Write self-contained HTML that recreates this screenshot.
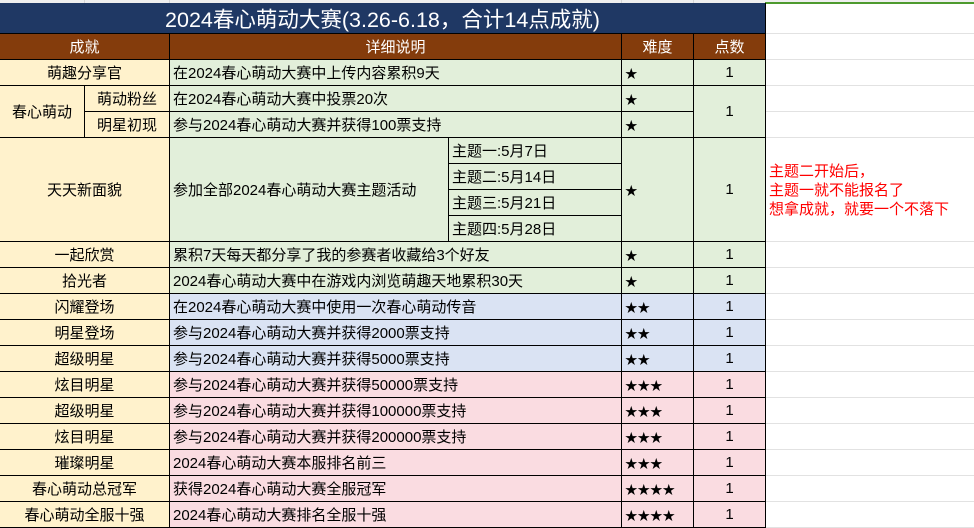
<!DOCTYPE html>
<html><head><meta charset="utf-8"><style>
*{margin:0;padding:0;box-sizing:border-box}
body{width:974px;height:528px;position:relative;background:#fff;overflow:hidden;font-family:"Liberation Sans","Noto Sans CJK SC",sans-serif;font-size:15px;color:#000}
.c{position:absolute;border-right:1px solid #000;border-bottom:1px solid #000;display:flex;align-items:center;white-space:nowrap;overflow:hidden}
.m{justify-content:center}
.l{padding-left:3px}
.s{font-size:12.5px;padding-left:3px}
.y{background:#FFF2CC}.g{background:#E2EFDA}.b{background:#DAE3F3}.p{background:#FADCE1}
.h{background:#843C0C;color:#fff;justify-content:center}
.gl{position:absolute;left:766px;width:208px;height:1px;background:#e2e2e2}
.vl{position:absolute;top:0;height:3px;width:1px;background:#d6d6d6}
</style></head><body>
<div style="position:absolute;left:0;top:0;width:974px;height:3px;background:#efefef"></div>
<div class="vl" style="left:84px"></div><div class="vl" style="left:169px"></div><div class="vl" style="left:621px"></div><div class="vl" style="left:693px"></div>
<div style="position:absolute;left:765px;top:2px;width:209px;height:2px;background:#4E9A2E"></div>
<div class="c m" style="left:0;top:3px;width:766px;height:31px;background:#1F3864;color:#fff;font-size:21.5px">2024春心萌动大赛(3.26-6.18，合计14点成就)</div>
<div class="c h" style="left:0;top:34px;width:170px;height:26px">成就</div>
<div class="c h" style="left:170px;top:34px;width:452px;height:26px">详细说明</div>
<div class="c h" style="left:622px;top:34px;width:72px;height:26px">难度</div>
<div class="c h" style="left:694px;top:34px;width:72px;height:26px">点数</div>

<div class="c m y" style="left:0;top:60px;width:170px;height:26px">萌趣分享官</div>
<div class="c l g" style="left:170px;top:60px;width:452px;height:26px">在2024春心萌动大赛中上传内容累积9天</div>
<div class="c s g" style="left:622px;top:60px;width:72px;height:26px">★</div>
<div class="c m g" style="left:694px;top:60px;width:72px;height:26px">1</div>

<div class="c m y" style="left:0;top:86px;width:85px;height:52px">春心萌动</div>
<div class="c m y" style="left:85px;top:86px;width:85px;height:26px">萌动粉丝</div>
<div class="c m y" style="left:85px;top:112px;width:85px;height:26px">明星初现</div>
<div class="c l g" style="left:170px;top:86px;width:452px;height:26px">在2024春心萌动大赛中投票20次</div>
<div class="c l g" style="left:170px;top:112px;width:452px;height:26px">参与2024春心萌动大赛并获得100票支持</div>
<div class="c s g" style="left:622px;top:86px;width:72px;height:26px">★</div>
<div class="c s g" style="left:622px;top:112px;width:72px;height:26px">★</div>
<div class="c m g" style="left:694px;top:86px;width:72px;height:52px">1</div>

<div class="c m y" style="left:0;top:138px;width:170px;height:104px">天天新面貌</div>
<div class="c l g" style="left:170px;top:138px;width:279px;height:104px">参加全部2024春心萌动大赛主题活动</div>
<div class="c l g" style="left:449px;top:138px;width:173px;height:26px">主题一:5月7日</div>
<div class="c l g" style="left:449px;top:164px;width:173px;height:26px">主题二:5月14日</div>
<div class="c l g" style="left:449px;top:190px;width:173px;height:26px">主题三:5月21日</div>
<div class="c l g" style="left:449px;top:216px;width:173px;height:26px">主题四:5月28日</div>
<div class="c s g" style="left:622px;top:138px;width:72px;height:104px">★</div>
<div class="c m g" style="left:694px;top:138px;width:72px;height:104px">1</div>
<div style="position:absolute;left:769px;top:162px;color:#f00;font-size:15px;line-height:19px">主题二开始后，<br>主题一就不能报名了<br>想拿成就，就要一个不落下</div>

<div class="c m y" style="left:0;top:242px;width:170px;height:26px">一起欣赏</div>
<div class="c l g" style="left:170px;top:242px;width:452px;height:26px">累积7天每天都分享了我的参赛者收藏给3个好友</div>
<div class="c s g" style="left:622px;top:242px;width:72px;height:26px">★</div>
<div class="c m g" style="left:694px;top:242px;width:72px;height:26px">1</div>

<div class="c m y" style="left:0;top:268px;width:170px;height:26px">拾光者</div>
<div class="c l g" style="left:170px;top:268px;width:452px;height:26px">2024春心萌动大赛中在游戏内浏览萌趣天地累积30天</div>
<div class="c s g" style="left:622px;top:268px;width:72px;height:26px">★</div>
<div class="c m g" style="left:694px;top:268px;width:72px;height:26px">1</div>

<div class="c m y" style="left:0;top:294px;width:170px;height:26px">闪耀登场</div>
<div class="c l b" style="left:170px;top:294px;width:452px;height:26px">在2024春心萌动大赛中使用一次春心萌动传音</div>
<div class="c s b" style="left:622px;top:294px;width:72px;height:26px">★★</div>
<div class="c m b" style="left:694px;top:294px;width:72px;height:26px">1</div>

<div class="c m y" style="left:0;top:320px;width:170px;height:26px">明星登场</div>
<div class="c l b" style="left:170px;top:320px;width:452px;height:26px">参与2024春心萌动大赛并获得2000票支持</div>
<div class="c s b" style="left:622px;top:320px;width:72px;height:26px">★★</div>
<div class="c m b" style="left:694px;top:320px;width:72px;height:26px">1</div>

<div class="c m y" style="left:0;top:346px;width:170px;height:26px">超级明星</div>
<div class="c l b" style="left:170px;top:346px;width:452px;height:26px">参与2024春心萌动大赛并获得5000票支持</div>
<div class="c s b" style="left:622px;top:346px;width:72px;height:26px">★★</div>
<div class="c m b" style="left:694px;top:346px;width:72px;height:26px">1</div>

<div class="c m y" style="left:0;top:372px;width:170px;height:26px">炫目明星</div>
<div class="c l p" style="left:170px;top:372px;width:452px;height:26px">参与2024春心萌动大赛并获得50000票支持</div>
<div class="c s p" style="left:622px;top:372px;width:72px;height:26px">★★★</div>
<div class="c m p" style="left:694px;top:372px;width:72px;height:26px">1</div>

<div class="c m y" style="left:0;top:398px;width:170px;height:26px">超级明星</div>
<div class="c l p" style="left:170px;top:398px;width:452px;height:26px">参与2024春心萌动大赛并获得100000票支持</div>
<div class="c s p" style="left:622px;top:398px;width:72px;height:26px">★★★</div>
<div class="c m p" style="left:694px;top:398px;width:72px;height:26px">1</div>

<div class="c m y" style="left:0;top:424px;width:170px;height:26px">炫目明星</div>
<div class="c l p" style="left:170px;top:424px;width:452px;height:26px">参与2024春心萌动大赛并获得200000票支持</div>
<div class="c s p" style="left:622px;top:424px;width:72px;height:26px">★★★</div>
<div class="c m p" style="left:694px;top:424px;width:72px;height:26px">1</div>

<div class="c m y" style="left:0;top:450px;width:170px;height:26px">璀璨明星</div>
<div class="c l p" style="left:170px;top:450px;width:452px;height:26px">2024春心萌动大赛本服排名前三</div>
<div class="c s p" style="left:622px;top:450px;width:72px;height:26px">★★★</div>
<div class="c m p" style="left:694px;top:450px;width:72px;height:26px">1</div>

<div class="c m y" style="left:0;top:476px;width:170px;height:26px">春心萌动总冠军</div>
<div class="c l p" style="left:170px;top:476px;width:452px;height:26px">获得2024春心萌动大赛全服冠军</div>
<div class="c s p" style="left:622px;top:476px;width:72px;height:26px">★★★★</div>
<div class="c m p" style="left:694px;top:476px;width:72px;height:26px">1</div>

<div class="c m y" style="left:0;top:502px;width:170px;height:26px">春心萌动全服十强</div>
<div class="c l p" style="left:170px;top:502px;width:452px;height:26px">2024春心萌动大赛排名全服十强</div>
<div class="c s p" style="left:622px;top:502px;width:72px;height:26px">★★★★</div>
<div class="c m p" style="left:694px;top:502px;width:72px;height:26px">1</div>

<div class="gl" style="top:33px"></div><div class="gl" style="top:59px"></div><div class="gl" style="top:85px"></div><div class="gl" style="top:111px"></div><div class="gl" style="top:137px"></div><div class="gl" style="top:241px"></div><div class="gl" style="top:267px"></div><div class="gl" style="top:293px"></div><div class="gl" style="top:319px"></div><div class="gl" style="top:345px"></div><div class="gl" style="top:371px"></div><div class="gl" style="top:397px"></div><div class="gl" style="top:423px"></div><div class="gl" style="top:449px"></div><div class="gl" style="top:475px"></div><div class="gl" style="top:501px"></div><div class="gl" style="top:527px"></div>
</body></html>
